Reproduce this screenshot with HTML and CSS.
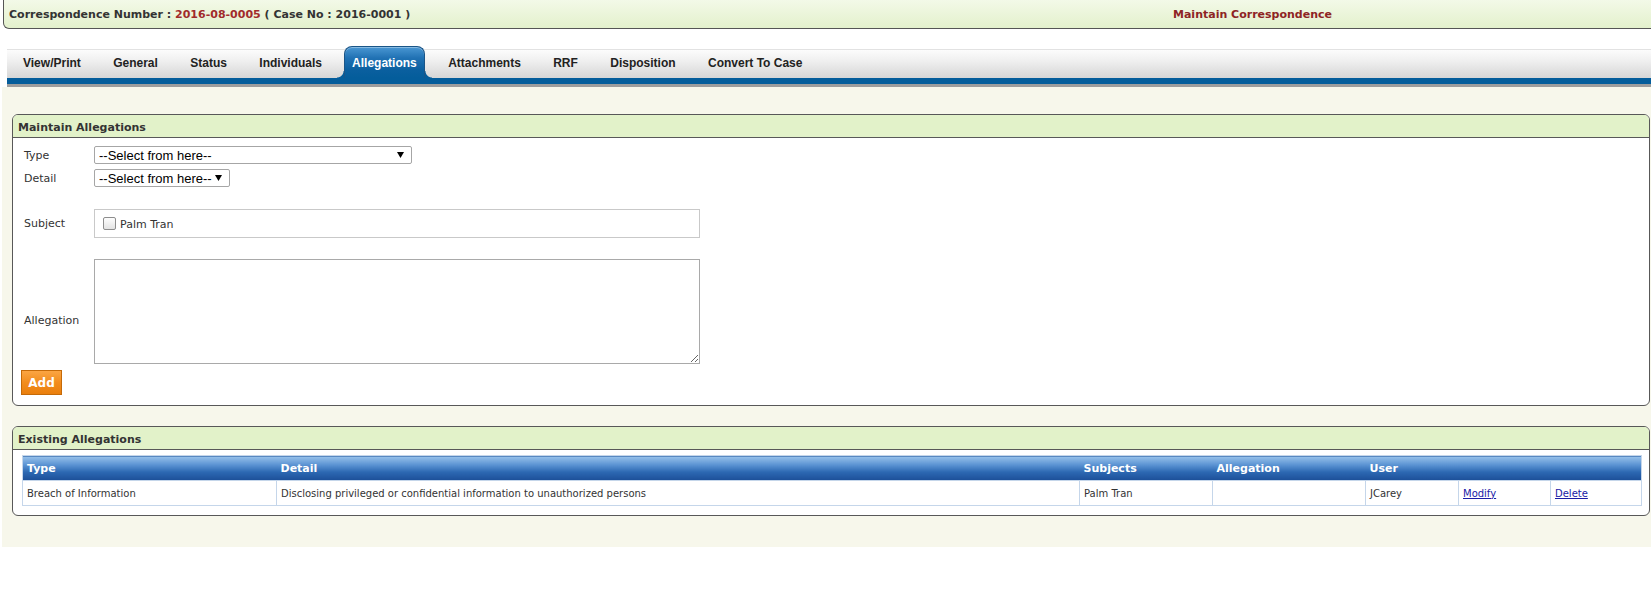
FILE: index.html
```html
<!DOCTYPE html>
<html>
<head>
<meta charset="utf-8">
<title>Maintain Correspondence</title>
<link rel="stylesheet" href="styles.css">
</head>
<body>
<header class="topbar">
  <div class="corr"><span class="lbl">Correspondence Number :</span> <span class="num">2016-08-0005</span> <span class="lbl">( Case No : 2016-0001 )</span></div>
  <div class="title">Maintain Correspondence</div>
</header>
<nav class="tabs">
  <div class="tabstrip">
    <a class="tab">View/Print</a>
    <a class="tab">General</a>
    <a class="tab">Status</a>
    <a class="tab">Individuals</a>
    <a class="tab active">Allegations</a>
    <a class="tab">Attachments</a>
    <a class="tab">RRF</a>
    <a class="tab">Disposition</a>
    <a class="tab">Convert To Case</a>
  </div>
  <div class="bluebar"></div>
  <div class="greybar"></div>
</nav>
<main class="content">
  <section class="panel panel-maintain">
    <div class="panel-head">Maintain Allegations</div>
    <div class="panel-body form">
      <div class="row row-type">
        <label class="flabel">Type</label>
        <select class="sel sel-wide"><option>--Select from here--</option></select>
      </div>
      <div class="row row-detail">
        <label class="flabel">Detail</label>
        <select class="sel sel-short"><option>--Select from here--</option></select>
      </div>
      <div class="row row-subject">
        <label class="flabel">Subject</label>
        <div class="subject-box"><input type="checkbox" class="chk" id="s1"><label for="s1" class="chk-label">Palm Tran</label></div>
      </div>
      <div class="row row-allegation">
        <label class="flabel flabel-low">Allegation</label>
        <textarea class="ta"></textarea>
      </div>
      <div class="row row-btn">
        <button class="btn">Add</button>
      </div>
    </div>
  </section>
  <section class="panel panel-existing">
    <div class="panel-head">Existing Allegations</div>
    <div class="panel-body list">
      <table class="grid">
        <colgroup>
          <col class="c-type"><col class="c-detail"><col class="c-subj"><col class="c-alleg"><col class="c-user"><col class="c-mod"><col class="c-del">
        </colgroup>
        <thead>
          <tr><th>Type</th><th>Detail</th><th>Subjects</th><th>Allegation</th><th>User</th><th></th><th></th></tr>
        </thead>
        <tbody>
          <tr>
            <td>Breach of Information</td>
            <td>Disclosing privileged or confidential information to unauthorized persons</td>
            <td>Palm Tran</td>
            <td></td>
            <td>JCarey</td>
            <td><a class="lnk" href="#">Modify</a></td>
            <td><a class="lnk" href="#">Delete</a></td>
          </tr>
        </tbody>
      </table>
    </div>
  </section>
</main>
</body>
</html>
```
FILE: styles.css
```css
html { overflow: hidden; background: #fff; }
body {
  margin: 0;
  font-family: "DejaVu Sans", Verdana, sans-serif;
  color: #333;
  width: 1720px;
}

/* top bar */
.topbar {
  margin-left: 3px;
  height: 29px;
  box-sizing: border-box;
  border: 1px solid #555;
  border-top: none;
  border-radius: 0 0 0 6px;
  background: linear-gradient(#f3f9e8, #e3f1cc);
  display: flex;
  align-items: center;
  padding: 1px 0 0 5px;
  font-size: 11px;
  font-weight: bold;
}
.corr { width: 1164px; white-space: nowrap; }
.lbl { color: #333; }
.num { color: #a12b2b; }
.title { color: #8e2424; white-space: nowrap; }

/* tabs */
.tabs { margin: 20px 0 0 7px; }
.tabstrip {
  height: 29px;
  box-sizing: border-box;
  border-top: 1px solid #e2e2e2;
  background: linear-gradient(#fcfcfc, #efefef 40%, #d6d6d6);
  display: flex;
  align-items: stretch;
}
.tab {
  display: flex;
  align-items: center;
  padding: 0 16px 3px;
  font-family: "Liberation Sans", Arial, sans-serif;
  font-size: 12px;
  font-weight: bold;
  color: #222;
  white-space: nowrap;
}
.tab + .tab { margin-left: 0.4px; }
.tab.active {
  position: relative;
  margin: -4px 7px 0 6px;
  padding: 4px 7px 3px;
  color: #fff;
  border: 1px solid #1a5587;
  border-bottom: none;
  border-radius: 8px 8px 0 0;
  background: linear-gradient(#4a97d3, #2172b4 35%, #0a5f9f 75%, #045d9b);
  box-shadow: inset 0 1px 0 rgba(255,255,255,0.35);
}
.tab.active::before,
.tab.active::after {
  content: "";
  position: absolute;
  bottom: 0;
  width: 7px;
  height: 7px;
}
.tab.active::before {
  left: -8px;
  background: radial-gradient(circle at 0 0, transparent 6px, #045d9b 7px);
}
.tab.active::after {
  right: -8px;
  background: radial-gradient(circle at 100% 0, transparent 6px, #045d9b 7px);
}
.bluebar { height: 6px; background: #045d9b; }
.greybar { height: 3px; background: #9d9d9d; }

/* content */
.content {
  margin-left: 2px;
  width: 1658px;
  background: #f7f7eb;
  padding: 27px 0 31px;
}
.panel {
  margin: 0 10px;
  border: 1px solid #585858;
  border-radius: 6px;
  background: #fff;
  overflow: hidden;
}
.panel + .panel { margin-top: 20px; }
.panel-head {
  height: 20px;
  line-height: 22px;
  padding: 2px 0 0 5px;
  background: #e2f2c9;
  border-bottom: 1px solid #585858;
  font-size: 11px;
  font-weight: bold;
  color: #333;
}
.form { padding: 8px 8px 10px; }
.row { display: flex; align-items: center; }
.flabel {
  width: 70px;
  padding-left: 3px;
  font-size: 11px;
  color: #333;
  flex: none;
}
.row-type { height: 18px; }
.row-detail { height: 18px; margin-top: 5px; }
.row-subject { margin-top: 22px; }
.row-allegation { margin-top: 21px; align-items: flex-start; }
.flabel-low { padding-top: 55px; }
.row-btn { margin-top: 6px; }

.sel {
  appearance: none;
  -webkit-appearance: none;
  height: 18px;
  box-sizing: border-box;
  border: 1px solid #a6a6a6;
  border-radius: 2px;
  padding: 0 0 0 4px;
  margin: 0;
  font-family: "Liberation Sans", Arial, sans-serif;
  font-size: 13px;
  color: #000;
  background: #fff url("data:image/svg+xml;utf8,<svg xmlns='http://www.w3.org/2000/svg' width='7' height='6'><path d='M0 0H7L3.5 6Z' fill='black'/></svg>") no-repeat right 7px center;
}
.sel-wide { width: 318px; }
.sel-short { width: 136px; }

.subject-box {
  width: 606px;
  height: 29px;
  box-sizing: border-box;
  border: 1px solid #c9c9c9;
  display: flex;
  align-items: center;
}
.chk {
  appearance: none;
  -webkit-appearance: none;
  width: 13px;
  height: 13px;
  margin: 0 4px 0 8px;
  border: 1px solid #8d8d8d;
  border-radius: 2px;
  background: linear-gradient(#fdfdfd, #e3e3e3);
  box-sizing: border-box;
}
.chk-label { font-size: 11px; color: #333; padding-top: 2px; }

.ta {
  width: 606px;
  height: 105px;
  box-sizing: border-box;
  border: 1px solid #a9a9a9;
  margin: 0;
  padding: 2px;
  resize: both;
  font-family: "DejaVu Sans", sans-serif;
}

.btn {
  width: 41px;
  height: 25px;
  box-sizing: border-box;
  border: 1px solid #c56a08;
  background: linear-gradient(#fba543, #f28d1e 50%, #ea7f0c);
  color: #fff;
  font-family: "DejaVu Sans", sans-serif;
  font-size: 12px;
  font-weight: bold;
  padding: 0;
  margin: 0;
}

/* existing list */
.list { padding: 5px 8px 9px 9px; }
.grid {
  width: 1619px;
  table-layout: fixed;
  border-collapse: collapse;
  border: 1px solid #c5d6ea;
}
.c-type { width: 254px; }
.c-detail { width: 803px; }
.c-subj { width: 133px; }
.c-alleg { width: 153px; }
.c-user { width: 93px; }
.c-mod { width: 92px; }
.c-del { width: 91px; }
.grid th {
  height: 24px;
  padding: 0 4px;
  text-align: left;
  color: #fff;
  font-size: 11px;
  font-weight: bold;
  background: linear-gradient(#97c1ea, #5b93d3 35%, #2c68b2 65%, #1c4f98);
}
.grid td {
  height: 24px;
  padding: 0 4px;
  border: 1px solid #c5d6ea;
  font-size: 10px;
  color: #333;
  white-space: nowrap;
}
.lnk { color: #1a1aa6; text-decoration: underline; }
```
